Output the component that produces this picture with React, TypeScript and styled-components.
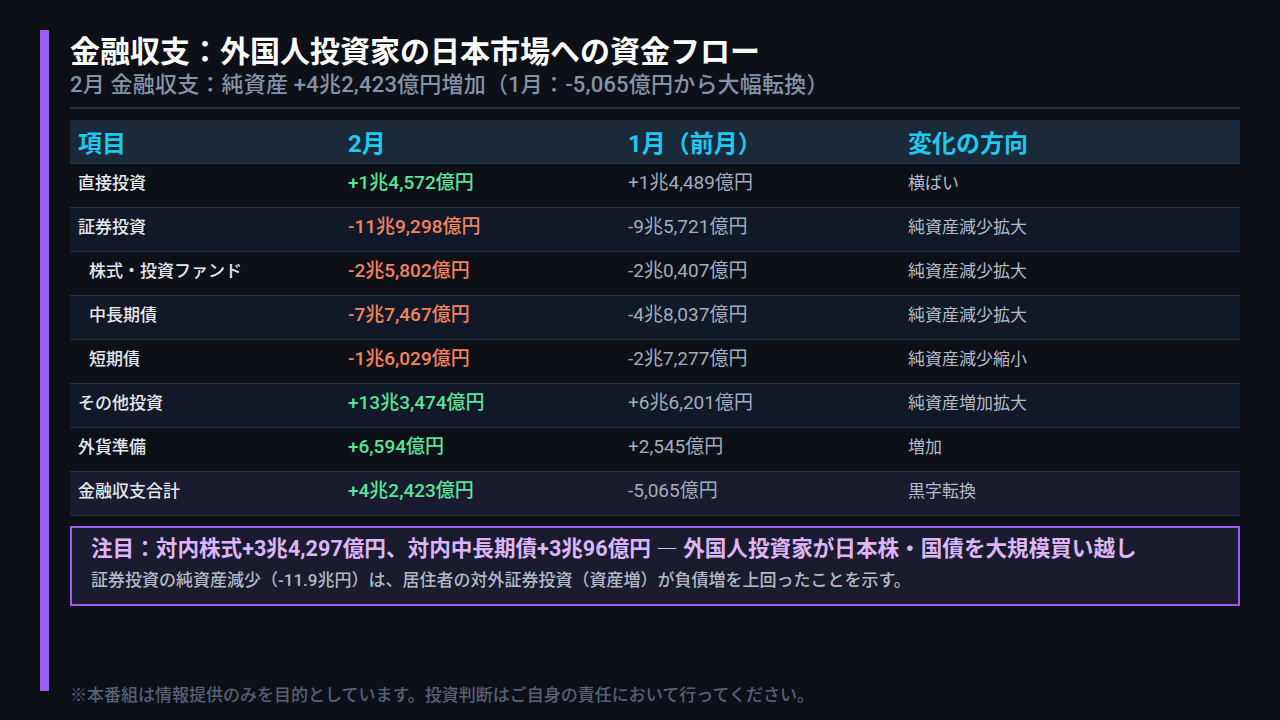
import React from "react";
import styled, { createGlobalStyle } from "styled-components";

const Global = createGlobalStyle`
  html, body { margin: 0; padding: 0; background: #0d1017; }
  body { font-family: Roboto, "Noto Sans CJK JP", sans-serif; }
`;

const Page = styled.div`
  width: 1280px;
  height: 720px;
  box-sizing: border-box;
  padding: 30px 40px 0 40px;
  display: flex;
  flex-direction: column;
  background: #0d1017;
  overflow: hidden;
`;

const Main = styled.div`
  display: flex;
  height: 661px;
`;

const AccentBar = styled.div`
  width: 9px;
  flex: none;
  background: #a15cf6;
`;

const Content = styled.div`
  flex: 1;
  padding-left: 21px;
  display: flex;
  flex-direction: column;
`;

const Title = styled.h1`
  margin: 4px 0 0 0;
  font-size: 30px;
  line-height: 36px;
  font-weight: 700;
  color: #ffffff;
`;

const Subtitle = styled.div`
  font-size: 22px;
  line-height: 30px;
  letter-spacing: 0.2px;
  color: #8494a8;
  font-weight: 500;
  padding-bottom: 7px;
  border-bottom: 2px solid #243140;
`;

const Table = styled.div`
  margin-top: 11px;
  display: grid;
  grid-template-columns: 270px 280px 280px 1fr;
`;

const HeadCell = styled.div`
  background: #1b2a3b;
  color: #20c8f0;
  font-size: 24px;
  font-weight: 700;
  height: 44px;
  display: flex;
  align-items: center;
  padding-left: 8px;
  border-bottom: 1px solid #2a3a4c;
  box-sizing: border-box;
`;

type Tone = "dark" | "mid" | "total";
const bgFor = (t: Tone) => (t === "dark" ? "#0d1017" : t === "mid" ? "#111827" : "#1a1b2e");

const Cell = styled.div<{ $tone: Tone }>`
  background: ${(p) => bgFor(p.$tone)};
  height: 44px;
  box-sizing: border-box;
  border-bottom: 1px solid #26323f;
  display: flex;
  align-items: flex-start;
  padding-top: 7px;
  padding-left: 8px;
  line-height: 24px;
`;

const LabelText = styled.span<{ $sub?: boolean }>`
  font-size: 17px;
  font-weight: 500;
  color: #e6e9ee;
  padding-left: ${(p) => (p.$sub ? "11px" : "0")};
`;

const ValueText = styled.span<{ $neg?: boolean }>`
  font-size: 19px;
  font-weight: 500;
  color: ${(p) => (p.$neg ? "#f6845f" : "#5ce39a")};
`;

const PrevText = styled.span`
  font-size: 19px;
  font-weight: 400;
  color: #a3aebc;
`;

const DirText = styled.span`
  font-size: 17px;
  font-weight: 400;
  color: #b4bcc8;
`;

const Note = styled.div`
  margin-top: 10px;
  border: 2px solid #a15cf6;
  background: #1a1b2e;
  padding: 4px 19px 12px 19px;
  display: flex;
  flex-direction: column;
  gap: 4px;
`;

const NoteTitle = styled.div`
  font-size: 21.6px;
  font-weight: 700;
  color: #dcb6fc;
  line-height: 30px;
`;

const Dash = styled.span`
  font-family: "Noto Sans CJK JP", sans-serif;
  font-weight: 400;
`;

const NoteBody = styled.div`
  font-size: 17px;
  font-weight: 500;
  color: #b3bac6;
  line-height: 24px;
`;

const Footer = styled.div`
  padding-left: 30px;
  margin-top: -6px;
  font-size: 17px;
  line-height: 20px;
  font-weight: 500;
  color: #566274;
`;

type Row = { label: string; sub?: boolean; v: string; neg?: boolean; prev: string; dir: string; tone: Tone };

const rows: Row[] = [
  { label: "直接投資", v: "+1兆4,572億円", prev: "+1兆4,489億円", dir: "横ばい", tone: "dark" },
  { label: "証券投資", v: "-11兆9,298億円", neg: true, prev: "-9兆5,721億円", dir: "純資産減少拡大", tone: "mid" },
  { label: "株式・投資ファンド", sub: true, v: "-2兆5,802億円", neg: true, prev: "-2兆0,407億円", dir: "純資産減少拡大", tone: "dark" },
  { label: "中長期債", sub: true, v: "-7兆7,467億円", neg: true, prev: "-4兆8,037億円", dir: "純資産減少拡大", tone: "mid" },
  { label: "短期債", sub: true, v: "-1兆6,029億円", neg: true, prev: "-2兆7,277億円", dir: "純資産減少縮小", tone: "dark" },
  { label: "その他投資", v: "+13兆3,474億円", prev: "+6兆6,201億円", dir: "純資産増加拡大", tone: "mid" },
  { label: "外貨準備", v: "+6,594億円", prev: "+2,545億円", dir: "増加", tone: "dark" },
  { label: "金融収支合計", v: "+4兆2,423億円", prev: "-5,065億円", dir: "黒字転換", tone: "total" },
];

export default function App() {
  return (
    <>
      <Global />
      <Page>
        <Main>
          <AccentBar />
          <Content>
            <Title>金融収支：外国人投資家の日本市場への資金フロー</Title>
            <Subtitle>2月 金融収支：純資産 +4兆2,423億円増加（1月：-5,065億円から大幅転換）</Subtitle>
            <Table>
              <HeadCell>項目</HeadCell>
              <HeadCell>2月</HeadCell>
              <HeadCell>1月（前月）</HeadCell>
              <HeadCell>変化の方向</HeadCell>
              {rows.map((r) => (
                <React.Fragment key={r.label}>
                  <Cell $tone={r.tone}>
                    <LabelText $sub={r.sub}>{r.label}</LabelText>
                  </Cell>
                  <Cell $tone={r.tone}>
                    <ValueText $neg={r.neg}>{r.v}</ValueText>
                  </Cell>
                  <Cell $tone={r.tone}>
                    <PrevText>{r.prev}</PrevText>
                  </Cell>
                  <Cell $tone={r.tone}>
                    <DirText>{r.dir}</DirText>
                  </Cell>
                </React.Fragment>
              ))}
            </Table>
            <Note>
              <NoteTitle>
                注目：対内株式+3兆4,297億円、対内中長期債+3兆96億円 <Dash>―</Dash> 外国人投資家が日本株・国債を大規模買い越し
              </NoteTitle>
              <NoteBody>証券投資の純資産減少（-11.9兆円）は、居住者の対外証券投資（資産増）が負債増を上回ったことを示す。</NoteBody>
            </Note>
          </Content>
        </Main>
        <Footer>※本番組は情報提供のみを目的としています。投資判断はご自身の責任において行ってください。</Footer>
      </Page>
    </>
  );
}
